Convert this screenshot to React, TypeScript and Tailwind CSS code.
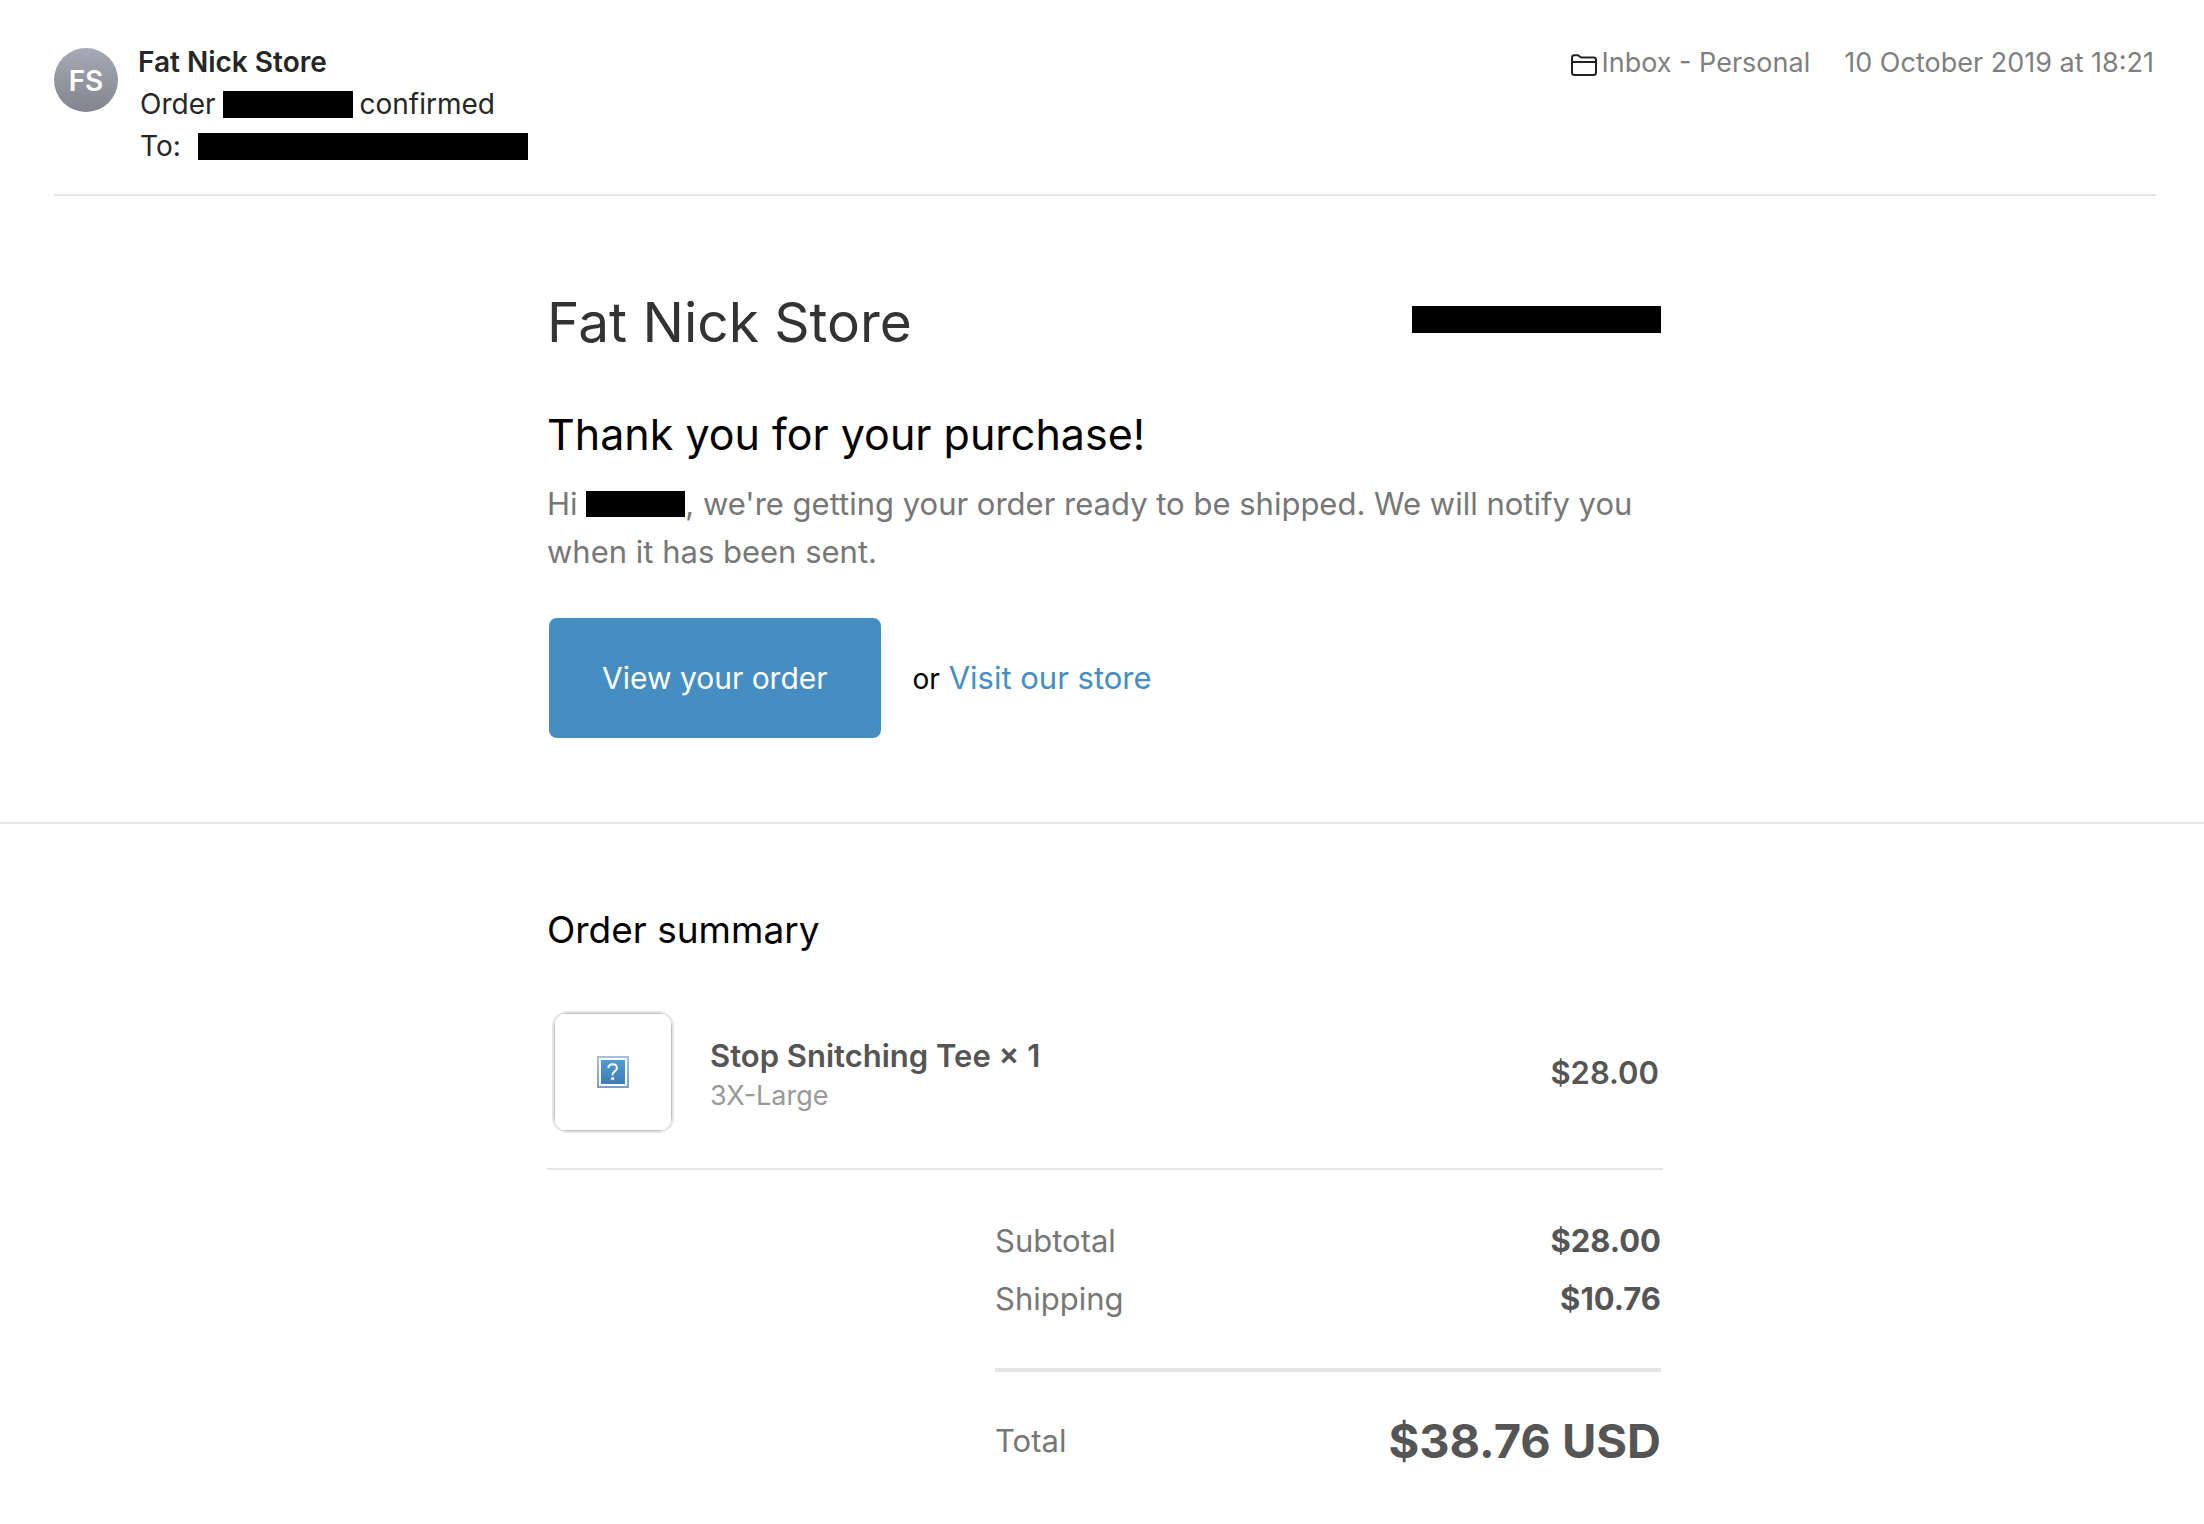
const TOTALS = [
  { label: "Subtotal", value: "$28.00" },
  { label: "Shipping", value: "$10.76" },
];

function FolderIcon() {
  return (
    <svg
      aria-hidden="true"
      viewBox="0 0 26 22"
      className="mt-1 h-[22px] w-[26px] shrink-0"
      fill="none"
      stroke="#222"
      strokeWidth="2"
      strokeLinejoin="round"
    >
      <path d="M1 18.5V3.6C1 2 1.9 1.2 3.4 1.2H6.6C8.6 1.2 8.4 3.4 10.4 3.4H22.6C24.2 3.4 25 4.2 25 5.8V18.5C25 20.1 24.2 20.9 22.6 20.9H3.4C1.8 20.9 1 20.1 1 18.5Z" />
      <path d="M1 8H25" />
    </svg>
  );
}

function MissingImageIcon() {
  return (
    <svg role="img" aria-label="Missing image" viewBox="0 0 32 32" className="size-8">
      <defs>
        <linearGradient id="frame" x1="0" y1="0" x2="0" y2="1">
          <stop offset="0" stopColor="#a9bfe0" />
          <stop offset="1" stopColor="#7d9cc9" />
        </linearGradient>
        <linearGradient id="fill" x1="0" y1="0" x2="0" y2="1">
          <stop offset="0" stopColor="#4d9bd2" />
          <stop offset="1" stopColor="#3d7db8" />
        </linearGradient>
      </defs>
      <rect width="32" height="32" fill="url(#frame)" />
      <rect x="2" y="2" width="28" height="28" fill="#fff" />
      <rect x="4" y="4" width="24" height="24" fill="url(#fill)" />
      <path
        d="M11.4 12C11.6 9.6 13.2 8.3 15.6 8.3C18.1 8.3 19.9 9.8 19.9 12C19.9 13.8 18.9 14.7 17.5 15.6C16.1 16.5 15.6 17.2 15.6 18.6V19.4"
        fill="none"
        stroke="#fff"
        strokeWidth="2"
      />
      <circle cx="15.6" cy="22.6" r="1.7" fill="#fff" />
    </svg>
  );
}

function MessageHeader() {
  return (
    <header className="mr-12 ml-[54px] flex items-start justify-between border-b-2 border-[#e5e5e5] pt-[41px] pb-[27px] text-[28px] leading-[42px] text-[#262626]">
      <div className="flex gap-5">
        <div className="mt-[7px] flex size-16 shrink-0 items-center justify-center rounded-full bg-linear-to-b from-[#a5aab6] to-[#82858f] pt-0.5 font-semibold text-white">
          FS
        </div>
        <div>
          <p className="font-semibold">Fat Nick Store</p>
          <div className="pl-0.5">
            <p className="flex items-center gap-[7px]">
              Order <span className="h-[27px] w-[130px] bg-black" /> confirmed
            </p>
            <p className="flex items-center gap-[17px]">
              To: <span className="h-[27px] w-[330px] bg-black" />
            </p>
          </div>
        </div>
      </div>
      <div className="flex items-center gap-[34px] pt-px pr-0.5 text-[27px] text-[#7f7f7f]">
        <span className="flex items-center gap-1">
          <FolderIcon />
          Inbox - Personal
        </span>
        <time dateTime="2019-10-10T18:21">10 October 2019 at 18:21</time>
      </div>
    </header>
  );
}

function Intro() {
  return (
    <section className="border-b-2 border-[#e5e5e5] pt-[88px] pb-[84px] pl-1.5">
      <div className="mx-auto max-w-[1116px]">
        <div className="flex items-start justify-between pr-0.5">
          <h1 className="text-[55px] leading-[76px] text-[#333]">Fat Nick Store</h1>
          <span className="mt-[22px] h-[27px] w-[249px] bg-black" />
        </div>
        <h2 className="mt-[46px] text-[43px] leading-[56px]">Thank you for your purchase!</h2>
        <p className="mt-[18px] text-[31px] leading-[48px] text-[#777]">
          Hi <span className="inline-block h-[26px] w-[99px] bg-black align-[-2px]" />, we're getting
          your order ready to be shipped. We will notify you when it has been sent.
        </p>
        <div className="mt-[42px] ml-0.5 flex items-center gap-8 text-[31px] leading-[48px]">
          <a href="#order" className="rounded-lg bg-[#468ec2] px-[53px] py-9 text-[30px] text-white">
            View your order
          </a>
          <span>
            <span className="text-[28px]">or</span>{" "}
            <a href="#store" className="text-[#468ec2]">
              Visit our store
            </a>
          </span>
        </div>
      </div>
    </section>
  );
}

function OrderSummary() {
  return (
    <section id="order" className="pt-[82px] pb-12 pl-1.5">
      <div className="mx-auto max-w-[1116px]">
        <h3 className="text-[37px] leading-[48px]">Order summary</h3>
        <table className="mt-14 w-full border-b-2 border-[#e5e5e5] text-[31px] leading-[40px]">
          <tbody>
            <tr>
              <td className="w-[163px] pt-px pb-[35px] pl-[5px]">
                {/* the rounded frame clips the corners of the square inner border */}
                <div className="size-[122px] overflow-hidden rounded-2xl border-2 border-[#e4e4e4]">
                  <div className="flex size-full items-center justify-center border border-[#bdbdbd]">
                    <MissingImageIcon />
                  </div>
                </div>
              </td>
              <td className="pt-2 pb-[35px]">
                <p className="font-semibold text-[#555]">Stop Snitching Tee × 1</p>
                <p className="text-[27px] text-[#999]">3X-Large</p>
              </td>
              <td className="pt-0.5 pr-1 pb-[35px] text-right font-semibold text-[#555]">$28.00</td>
            </tr>
          </tbody>
        </table>
        <table className="mt-[42px] mr-0.5 ml-auto w-[666px] text-[31px] leading-[58px]">
          <tbody>
            {TOTALS.map(({ label, value }) => (
              <tr key={label}>
                <th scope="row" className="text-left font-normal text-[#777]">
                  {label}
                </th>
                <td className="text-right font-bold text-[#555]">{value}</td>
              </tr>
            ))}
          </tbody>
        </table>
        <table className="mt-10 mr-0.5 ml-auto w-[666px] border-t-4 border-[#e5e5e5] text-[31px] leading-[58px]">
          <tbody>
            <tr>
              <th scope="row" className="pt-10 text-left font-normal text-[#777]">
                Total
              </th>
              <td className="pt-10 text-right text-[47px] font-bold text-[#555]">$38.76 USD</td>
            </tr>
          </tbody>
        </table>
      </div>
    </section>
  );
}

export default function App() {
  return (
    <main className="min-h-screen bg-white font-[Inter,sans-serif] text-black">
      <MessageHeader />
      <Intro />
      <OrderSummary />
    </main>
  );
}
